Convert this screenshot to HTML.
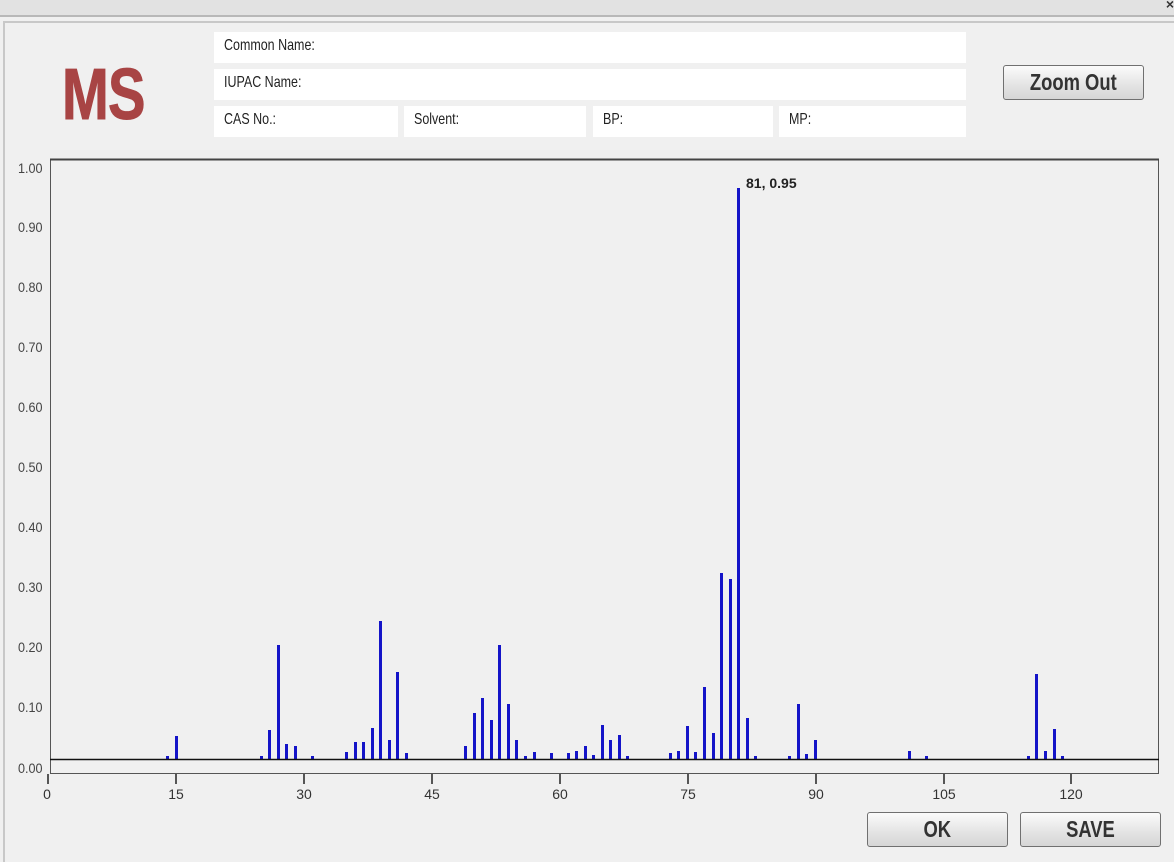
<!DOCTYPE html>
<html><head><meta charset="utf-8"><style>
*{margin:0;padding:0;box-sizing:border-box}
body{width:1174px;height:862px;overflow:hidden;background:#f0f0f0;font-family:"Liberation Sans",sans-serif;position:relative}
.top{position:absolute;left:0;top:0;width:1174px;height:17px;background:#e2e2e2;border-bottom:2px solid #b8b8b8}
.x{position:absolute;right:0;top:-4px;font-size:14px;font-weight:bold;color:#333}
.dlg{position:absolute;left:3px;top:21px;width:1171px;height:841px;border-left:2px solid #c8c8c8;border-top:2px solid #c8c8c8;background:#f0f0f0}
.ms{position:absolute;left:62px;top:54px;font-size:72px;font-weight:bold;color:#a84444;transform:scaleX(0.78);transform-origin:left top;letter-spacing:-1px;-webkit-text-stroke:1px #a84444}
.f{position:absolute;background:#fff;height:31px;font-size:16px;color:#222;padding:5px 0 0 10px;white-space:nowrap}
.f span{display:inline-block;transform:scaleX(0.78);transform-origin:left center}
.btn{position:absolute;height:35px;border:1px solid #707070;border-radius:3px;background:linear-gradient(#fbfbfb,#e3e3e3 60%,#d6d6d6);font-weight:bold;font-size:23px;color:#333;text-align:center;line-height:33px}
.btn span{display:inline-block;transform:scaleX(0.8)}
</style></head><body>
<div class="top"><span class="x">×</span></div>
<div class="dlg"></div>
<div class="ms">MS</div>
<div class="f" style="left:214px;top:32px;width:752px"><span>Common Name:</span></div>
<div class="f" style="left:214px;top:69px;width:752px"><span>IUPAC Name:</span></div>
<div class="f" style="left:214px;top:106px;width:184px"><span>CAS No.:</span></div>
<div class="f" style="left:404px;top:106px;width:182px"><span>Solvent:</span></div>
<div class="f" style="left:593px;top:106px;width:180px"><span>BP:</span></div>
<div class="f" style="left:779px;top:106px;width:187px"><span>MP:</span></div>
<div class="btn" style="left:1003px;top:65px;width:141px"><span>Zoom Out</span></div>
<div class="btn" style="left:867px;top:812px;width:141px"><span>OK</span></div>
<div class="btn" style="left:1020px;top:812px;width:141px"><span>SAVE</span></div>
<svg width="1174" height="862" style="position:absolute;left:0;top:0">
<rect x="50.5" y="159.5" width="1108" height="614" fill="#f0f0f0" stroke="#555" stroke-width="1"/>
<line x1="50" y1="159.5" x2="1159" y2="159.5" stroke="#444" stroke-width="2"/>
<g font-size="14" fill="#444" font-family="Liberation Sans,sans-serif" transform="translate(18,0) scale(0.9,1) translate(-18,0)">
<text x="18" y="173">1.00</text><text x="18" y="232">0.90</text><text x="18" y="292">0.80</text><text x="18" y="352">0.70</text><text x="18" y="412">0.60</text><text x="18" y="472">0.50</text><text x="18" y="532">0.40</text><text x="18" y="592">0.30</text><text x="18" y="652">0.20</text><text x="18" y="712">0.10</text><text x="18" y="773">0.00</text>
</g>
<g stroke="#222" stroke-width="1.5">
<line x1="48" y1="774" x2="48" y2="784"/><line x1="176" y1="774" x2="176" y2="784"/><line x1="304" y1="774" x2="304" y2="784"/><line x1="432" y1="774" x2="432" y2="784"/><line x1="560" y1="774" x2="560" y2="784"/><line x1="688" y1="774" x2="688" y2="784"/><line x1="816" y1="774" x2="816" y2="784"/><line x1="944" y1="774" x2="944" y2="784"/><line x1="1071" y1="774" x2="1071" y2="784"/>
</g>
<g font-size="14" fill="#333" text-anchor="middle" font-family="Liberation Sans,sans-serif">
<text x="47" y="799">0</text><text x="176" y="799">15</text><text x="304" y="799">30</text><text x="432" y="799">45</text><text x="560" y="799">60</text><text x="688" y="799">75</text><text x="816" y="799">90</text><text x="944" y="799">105</text><text x="1071" y="799">120</text>
</g>
<g fill="#1414c8">
<rect x="166" y="756" width="3" height="3"/><rect x="175" y="736" width="3" height="23"/>
<rect x="260" y="756" width="3" height="3"/><rect x="268" y="730" width="3" height="29"/><rect x="277" y="645" width="3" height="114"/><rect x="285" y="744" width="3" height="15"/><rect x="294" y="746" width="3" height="13"/><rect x="311" y="756" width="3" height="3"/>
<rect x="345" y="752" width="3" height="7"/><rect x="354" y="742" width="3" height="17"/><rect x="362" y="742" width="3" height="17"/><rect x="371" y="728" width="3" height="31"/><rect x="379" y="621" width="3" height="138"/><rect x="388" y="740" width="3" height="19"/><rect x="396" y="672" width="3" height="87"/><rect x="405" y="753" width="3" height="6"/>
<rect x="464" y="746" width="3" height="13"/><rect x="473" y="713" width="3" height="46"/><rect x="481" y="698" width="3" height="61"/><rect x="490" y="720" width="3" height="39"/><rect x="498" y="645" width="3" height="114"/><rect x="507" y="704" width="3" height="55"/><rect x="515" y="740" width="3" height="19"/><rect x="524" y="756" width="3" height="3"/><rect x="533" y="752" width="3" height="7"/><rect x="550" y="753" width="3" height="6"/><rect x="567" y="753" width="3" height="6"/><rect x="575" y="751" width="3" height="8"/><rect x="584" y="746" width="3" height="13"/><rect x="592" y="755" width="3" height="4"/><rect x="601" y="725" width="3" height="34"/><rect x="609" y="740" width="3" height="19"/><rect x="618" y="735" width="3" height="24"/><rect x="626" y="756" width="3" height="3"/>
<rect x="669" y="753" width="3" height="6"/><rect x="677" y="751" width="3" height="8"/><rect x="686" y="726" width="3" height="33"/><rect x="694" y="752" width="3" height="7"/><rect x="703" y="687" width="3" height="72"/><rect x="712" y="733" width="3" height="26"/><rect x="720" y="573" width="3" height="186"/><rect x="729" y="579" width="3" height="180"/><rect x="737" y="188" width="3" height="571"/><rect x="746" y="718" width="3" height="41"/><rect x="754" y="756" width="3" height="3"/>
<rect x="788" y="756" width="3" height="3"/><rect x="797" y="704" width="3" height="55"/><rect x="805" y="754" width="3" height="5"/><rect x="814" y="740" width="3" height="19"/>
<rect x="908" y="751" width="3" height="8"/><rect x="925" y="756" width="3" height="3"/>
<rect x="1027" y="756" width="3" height="3"/><rect x="1035" y="674" width="3" height="85"/><rect x="1044" y="751" width="3" height="8"/><rect x="1053" y="729" width="3" height="30"/><rect x="1061" y="756" width="3" height="3"/>
</g>
<line x1="50" y1="759.5" x2="1159" y2="759.5" stroke="#111" stroke-width="1.5"/>
<text x="746" y="188" font-size="14" font-weight="bold" fill="#222" font-family="Liberation Sans,sans-serif">81, 0.95</text>
</svg>
</body></html>
